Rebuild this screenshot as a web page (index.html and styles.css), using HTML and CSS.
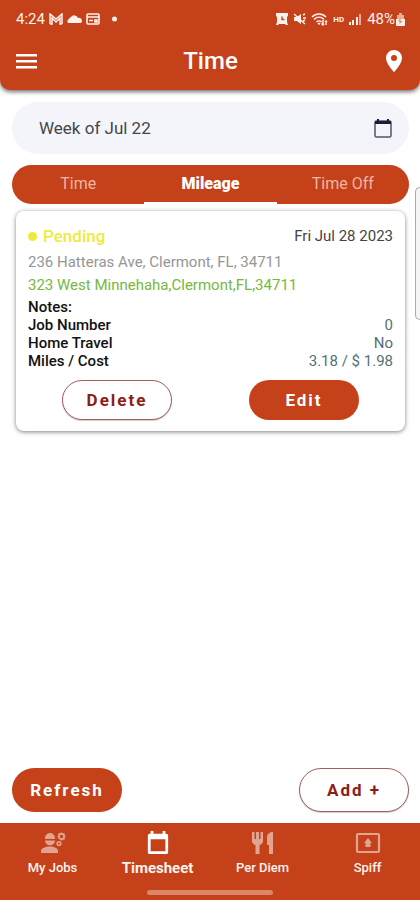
FILE: index.html
```html
<!DOCTYPE html>
<html lang="en">
<head>
<meta charset="utf-8">
<meta name="viewport" content="width=device-width, initial-scale=1">
<title>Time</title>
<link rel="stylesheet" href="styles.css">
</head>
<body>
<header class="header">
  <div class="status">
    <div class="status-group">
      <span class="clock">4:24</span>
      <svg width="14" height="12" viewBox="0 0 14 12" fill="none" stroke="currentColor" stroke-width="1.5"><path d="M1 11V1l6 5 6-5v10M1 11h2V5l4 4 4-4v6h2"/></svg>
      <svg width="15" height="12" viewBox="0 0 15 12" fill="currentColor"><path d="M1 10a2.5 2.5 0 0 1 1-4 3 3 0 0 1 2-2 4 4 0 0 1 7 1 3 3 0 0 1 3 5z"/></svg>
      <svg width="14" height="12" viewBox="0 0 14 12" fill="none" stroke="currentColor" stroke-width="1.6"><rect x="1" y="1" width="12" height="10" rx="1"/><path d="M1 4h12M3 7.5h4M9 7h2v2H9z"/></svg>
      <svg class="dot" width="5" height="12" viewBox="0 0 5 12" fill="currentColor"><circle cx="2.5" cy="6" r="2.5"/></svg>
    </div>
    <div class="status-group status-right">
      <svg width="12" height="12" viewBox="0 0 12 12"><path fill="currentColor" d="M0 0h12v3l-1 1v5l1 3h-2l-1-1H3l-1 1H0l1-3V4L0 3z"/><path d="M6 3.500v3h2.500" fill="none" stroke="#c44119" stroke-width="1.400"/></svg>
      <svg width="13" height="12" viewBox="0 0 13 12"><path fill="currentColor" d="M1 4h3l4-3v10L4 8H1z"/><path d="M1 1l11 10M10 2l2-1M10 5h3M10 8l2-1" fill="none" stroke="currentColor" stroke-width="1.400"/></svg>
      <svg width="17" height="13" viewBox="0 0 17 13" fill="none" stroke="currentColor" stroke-width="1.500"><path d="M1 4c4-4 10-4 14 0M3 6.500c3-3 7-3 10 0M5.500 9c1.500-1.500 3.500-1.500 5 0"/><path d="M7 10l1 1 1-1M12 7v5M10.500 10.500L12 12l1-1M15 12V8M14 9l1-1 1 1"/></svg>
      <span class="hd">HD</span>
      <svg width="13" height="12" viewBox="0 0 13 12" fill="currentColor"><path d="M0 9h2v3H0zM3 7h2v5H3z"/><path d="M7 4h2v8H7z"/><path opacity=".6" d="M10 1h2v11h-2z"/></svg>
      <span class="battery-text">48%</span>
      <svg width="9" height="13" viewBox="0 0 9 13"><path fill="currentColor" opacity=".6" d="M3 0h3v2h2v5H1V2h2z"/><path fill="currentColor" d="M0 6h9v6a1 1 0 0 1-1 1H1a1 1 0 0 1-1-1z"/><path d="M4.500 5v3h2l-3 3V8.500H2z" fill="#dd8569"/></svg>
    </div>
  </div>
  <div class="bar">
    <button class="icon-button" aria-label="Menu"><svg width="22" height="22" viewBox="0 0 22 22" fill="currentColor"><path d="M0 4h21v2.500H0zM0 10h21v2.500H0zM0 16h21v2.500H0z"/></svg></button>
    <h1 class="title">Time</h1>
    <button class="icon-button" aria-label="Location"><svg width="22" height="22" viewBox="0 0 22 22"><path fill="currentColor" fill-rule="evenodd" d="M11 0a8 8 0 0 0-8 8c0 6 8 14 8 14s8-8 8-14a8 8 0 0 0-8-8zm0 5a3 3 0 1 1 0 6 3 3 0 0 1 0-6z"/></svg></button>
  </div>
</header>

<main class="content">
  <button class="week">
    <span>Week of Jul 22</span>
    <svg width="18" height="20" viewBox="0 0 18 20"><rect x="1" y="3" width="16" height="16" rx="1.500" fill="none" stroke="#55546a" stroke-width="1.500"/><path fill="#1d1b38" d="M1 3h16v3H1zM3 1h2v3H3zM13 1h2v3h-2z"/></svg>
  </button>

  <div class="tabs" role="tablist">
    <button class="tab" role="tab" aria-selected="false">Time</button>
    <button class="tab tab-active" role="tab" aria-selected="true">Mileage</button>
    <button class="tab" role="tab" aria-selected="false">Time Off</button>
  </div>

  <article class="card">
    <div class="card-head">
      <span class="pending"><span class="pending-dot"></span>Pending</span>
      <time class="date" datetime="2023-07-28">Fri Jul 28 2023</time>
    </div>
    <p class="address">236 Hatteras Ave, Clermont, FL, 34711</p>
    <p class="address address-to">323 West Minnehaha,Clermont,FL,34711</p>
    <dl class="details">
      <div class="row"><dt>Notes:</dt><dd></dd></div>
      <div class="row"><dt>Job Number</dt><dd>0</dd></div>
      <div class="row"><dt>Home Travel</dt><dd>No</dd></div>
      <div class="row"><dt>Miles / Cost</dt><dd>3.18 / $ 1.98</dd></div>
    </dl>
    <div class="card-actions">
      <button class="button button-outline">Delete</button>
      <button class="button">Edit</button>
    </div>
  </article>
  <div class="page-actions">
    <button class="button button-tall">Refresh</button>
    <button class="button button-tall button-outline">Add +</button>
  </div>
</main>

<footer class="footer">
  <nav class="nav">
    <a class="nav-item" href="#jobs">
      <svg width="26" height="24" viewBox="0 0 26 24"><path fill="currentColor" d="M1 22v-2c0-3 5-4.500 9-4.500s8 1.500 8 4.500v2zM5 7a5 5 0 0 1 10 0v1H5zM5 9.500h10a5 5 0 0 1-10 0z"/><g fill="none" stroke="currentColor" stroke-width="1.600"><circle cx="21.500" cy="5.500" r="2.600"/><circle cx="19" cy="12.500" r="1.800"/><path d="M21.500 1.500v2M21.500 7.500v2M17.500 5.500h2M23.500 5.500h2M18.500 2.500l1 1M23.500 7.500l1 1M24.500 2.500l-1 1"/></g></svg>
      <span>My Jobs</span>
    </a>
    <a class="nav-item nav-active" href="#timesheet" aria-current="page">
      <svg width="24" height="26" viewBox="0 0 24 26"><path fill="currentColor" fill-rule="evenodd" d="M4 0h3v3h10V0h3v3h1a2 2 0 0 1 2 2v18a2 2 0 0 1-2 2H3a2 2 0 0 1-2-2V5a2 2 0 0 1 2-2h1zM4 9v13h16V9z"/></svg>
      <span>Timesheet</span>
    </a>
    <a class="nav-item" href="#per-diem">
      <svg width="22" height="24" viewBox="0 0 22 24" fill="currentColor"><path d="M0 1h2.500v7h1.500V1h3v7h1.500V1H11v9c0 2-1.500 3.500-3.500 4v9h-4v-9C1.500 13.500 0 12 0 10zM21 1v22h-4v-9h-2V6c0-3 3-5 6-5z"/></svg>
      <span>Per Diem</span>
    </a>
    <a class="nav-item" href="#spiff">
      <svg width="26" height="24" viewBox="0 0 26 24"><rect x="2" y="3" width="22" height="18" rx="1" fill="none" stroke="currentColor" stroke-width="2.200"/><path fill="currentColor" d="M13 7l4 5h-1.500v4h-5v-4H9z"/></svg>
      <span>Spiff</span>
    </a>
  </nav>
  <div class="home-indicator"></div>
</footer>
<div class="edge-handle"></div>
</body>
</html>
```
FILE: styles.css
```css
* { box-sizing: border-box; }

body {
  margin: 0;
  min-height: 100vh;
  display: flex;
  flex-direction: column;
  background: #fff;
  color: #111;
  font-family: Roboto, "Liberation Sans", sans-serif;
  font-size: 15px;
}

button { font-family: inherit; border: 0; cursor: pointer; }
svg { display: block; flex: none; }

.header {
  padding: 9px 15px 15px 16px;
  color: #fff2ee;
  background: #c44119;
  border-radius: 0 0 10px 10px;
  box-shadow: 0 2px 4px rgba(0, 0, 0, .55);
}

.status, .status-group, .bar { display: flex; align-items: center; }
.status { justify-content: space-between; height: 20px; }
.status-group { gap: 4px; }
.status-group.status-right { gap: 5px; }
.clock, .battery-text { font-size: 15px; }
.battery-text { margin-right: -4px; }
.dot { margin-left: 8px; }
.hd { font-size: 8px; font-weight: 700; }

.bar { justify-content: space-between; margin-top: 18px; color: #fff; }
.icon-button { padding: 0; background: none; color: inherit; }
.title { margin: 0; font-size: 24px; line-height: 28px; font-weight: 500; }

.content { flex: 1; display: flex; flex-direction: column; padding: 12px 11px 11px 12px; }

.week {
  display: flex;
  align-items: center;
  justify-content: space-between;
  height: 52px;
  padding: 0 17px 0 27px;
  border-radius: 26px;
  background: #f3f5fa;
  color: #45454b;
  font-size: 17px;
}

.tabs {
  display: grid;
  grid-template-columns: repeat(3, 1fr);
  margin-top: 11px;
  border-radius: 20px;
  overflow: hidden;
  background: #c44119;
}
.tab {
  height: 39px;
  padding: 0;
  border-bottom: 2px solid transparent;
  background: none;
  color: #efb5a4;
  font-size: 16px;
}
.tab-active { border-color: #fff; color: #fff; font-weight: 900; }

.card {
  margin: 7px 4px 0;
  padding: 14px 12px 11px;
  border-radius: 8px;
  background: #fff;
  box-shadow: 0 1px 4px rgba(0, 0, 0, .5);
}
.card-head { display: flex; justify-content: space-between; align-items: center; line-height: 22px; }
.pending { display: flex; align-items: center; gap: 6px; color: #ecec3c; font-size: 17px; font-weight: 500; }
.pending-dot { width: 9px; height: 9px; border-radius: 50%; background: currentColor; }
.date { color: #444; }
.address { margin: 5px 0 0; line-height: 20px; color: #969696; }
.address-to { margin-top: 3px; color: #76b83c; }
.details { margin: 3px 0 0; }
.row { display: flex; justify-content: space-between; line-height: 18px; }
.row dt { font-weight: 500; }
.row dd { margin: 0; color: #567078; }

.card-actions { display: flex; justify-content: space-between; margin-top: 10px; padding: 0 34px; }
.button {
  width: 110px;
  height: 40px;
  padding: 0;
  border-radius: 22px;
  background: #c44119;
  color: #fff;
  font-size: 17px;
  font-weight: 700;
  letter-spacing: 2px;
}
.button-tall { height: 44px; }
.button-outline {
  border: 1px solid #a45c5c;
  background: #fff;
  color: #8e1d1a;
  box-shadow: 0 1px 1px rgba(0, 0, 0, .2);
}
.page-actions { display: flex; justify-content: space-between; margin-top: auto; }

.footer { padding: 8px 0 5px; background: #c44119; }
.nav { display: grid; grid-template-columns: repeat(4, 1fr); }
.nav-item {
  display: flex;
  flex-direction: column;
  align-items: center;
  gap: 5px;
  color: #e2a391;
  font-size: 13px;
  line-height: 16px;
  text-decoration: none;
}
.nav-item svg { height: 24px; }
.nav-item span { color: #fff1ed; font-weight: 500; }
.nav-item.nav-active { color: #fff; }
.nav-active span { font-size: 15px; font-weight: 700; }
.home-indicator { width: 30%; height: 5px; margin: 14px auto 0; border-radius: 3px; background: #dd8569; }

.edge-handle {
  position: absolute;
  right: 0;
  top: 187px;
  width: 5px;
  height: 133px;
  border: 1px solid #aaa;
  border-right: 0;
  border-radius: 5px 0 0 5px;
  background: #f5f5f5;
}
```
